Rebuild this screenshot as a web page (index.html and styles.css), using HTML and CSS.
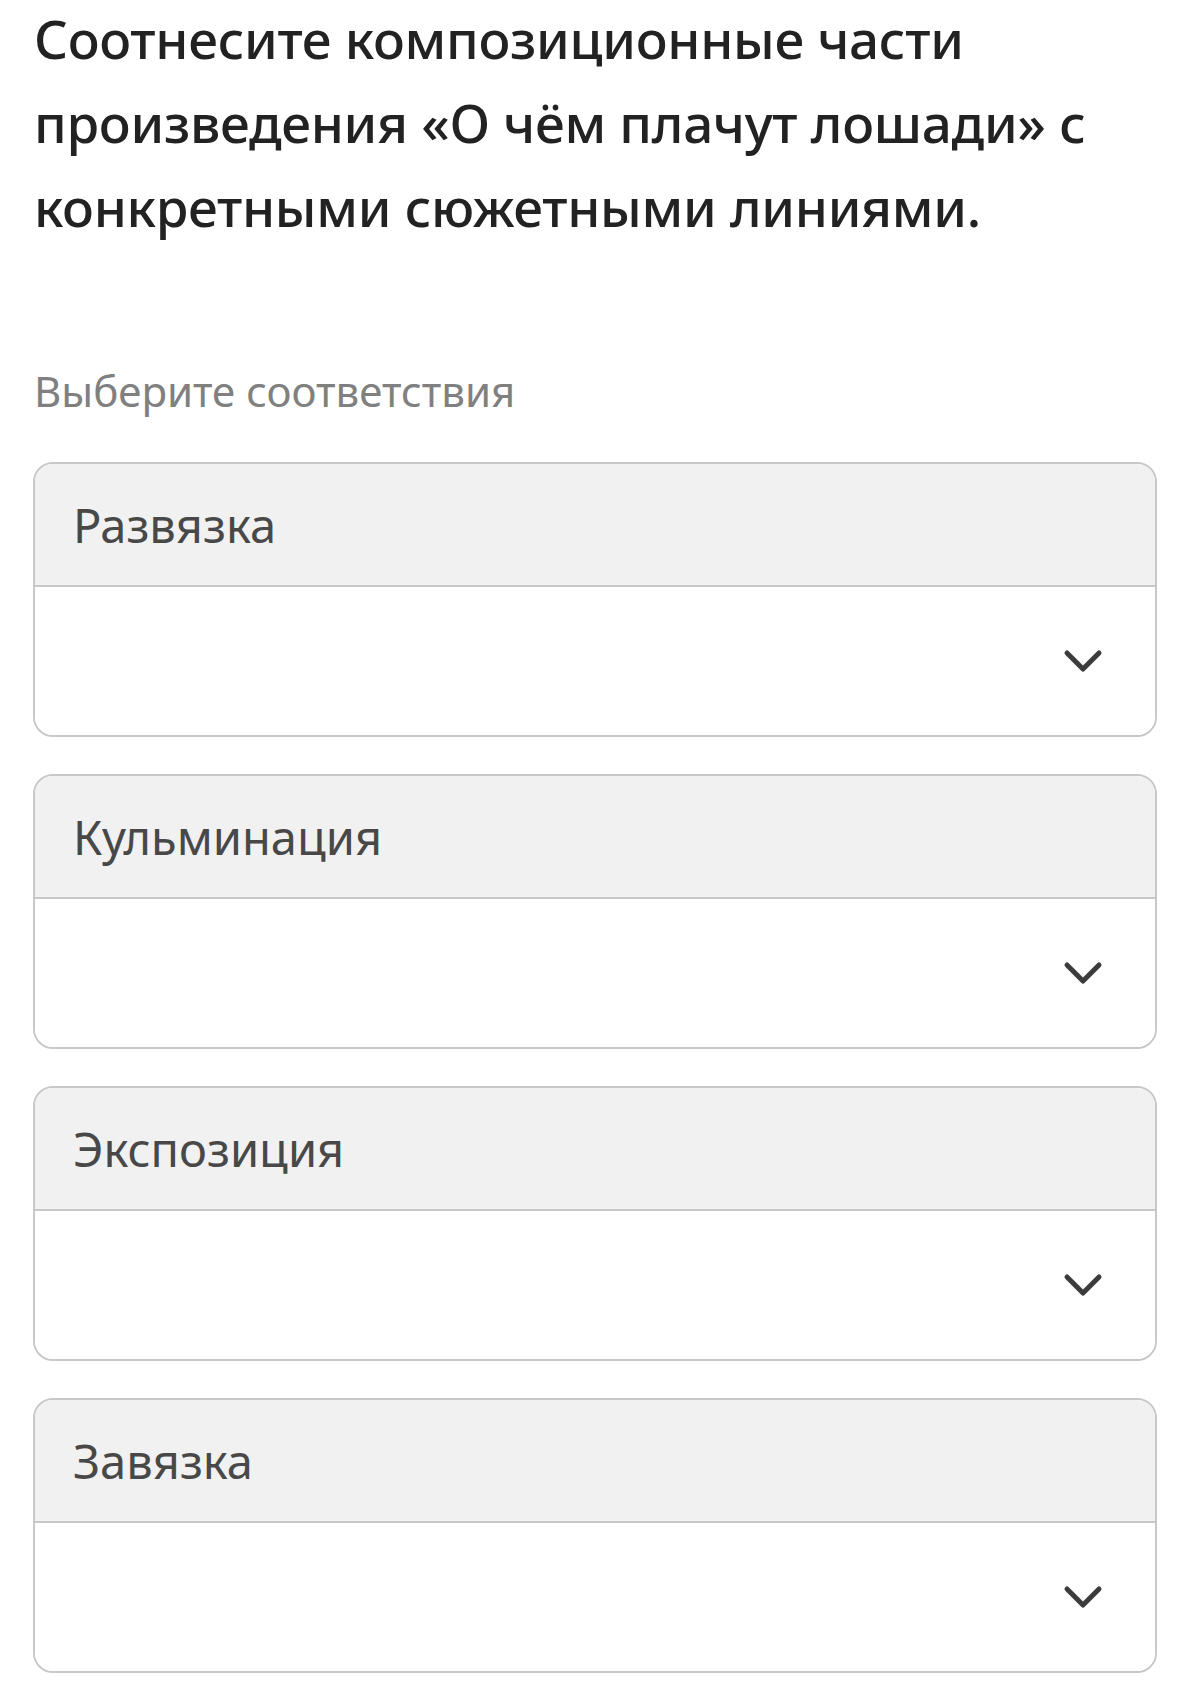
FILE: index.html
```html
<!DOCTYPE html>
<html lang="ru">
<head>
<meta charset="utf-8">
<title>Соответствия</title>
<link rel="stylesheet" href="styles.css">
</head>
<body>
<main class="task">
  <h1 class="task-title">Соотнесите композиционные части произведения «О чём плачут лошади» с конкретными сюжетными линиями.</h1>
  <p class="task-hint">Выберите соответствия</p>
  <div class="match-list">
    <section class="match">
      <div class="match-head">Развязка</div>
      <div class="match-select">
        <svg class="chevron" viewBox="0 0 40 24" width="40" height="24"><polyline points="4,4 20,20 36,4"/></svg>
      </div>
    </section>
    <section class="match">
      <div class="match-head">Кульминация</div>
      <div class="match-select">
        <svg class="chevron" viewBox="0 0 40 24" width="40" height="24"><polyline points="4,4 20,20 36,4"/></svg>
      </div>
    </section>
    <section class="match">
      <div class="match-head">Экспозиция</div>
      <div class="match-select">
        <svg class="chevron" viewBox="0 0 40 24" width="40" height="24"><polyline points="4,4 20,20 36,4"/></svg>
      </div>
    </section>
    <section class="match">
      <div class="match-head">Завязка</div>
      <div class="match-select">
        <svg class="chevron" viewBox="0 0 40 24" width="40" height="24"><polyline points="4,4 20,20 36,4"/></svg>
      </div>
    </section>
  </div>
</main>
</body>
</html>
```
FILE: styles.css
```css
html, body {
  margin: 0;
  padding: 0;
  background: #ffffff;
}

body {
  font-family: "Noto Sans", "Open Sans", sans-serif;
}

.task {
  padding: 0 46px 40px 33px;
}

.task-title {
  margin: -3px 0 0 1px;
  font-size: 53px;
  line-height: 84px;
  font-weight: 500;
  letter-spacing: -0.3px;
  color: #222222;
}

.task-hint {
  margin: 117px 0 0 1px;
  font-size: 42px;
  line-height: 50px;
  color: #808080;
}

.match-list {
  margin-top: 46px;
  display: flex;
  flex-direction: column;
  gap: 37px;
}

.match {
  border: 2px solid #c8c8c8;
  border-radius: 20px;
  overflow: hidden;
}

.match-head {
  height: 121px;
  display: flex;
  align-items: center;
  padding-left: 38px;
  background: #f1f1f1;
  border-bottom: 2px solid #c8c8c8;
  font-size: 47px;
  color: #484848;
}

.match-select {
  height: 148px;
  display: flex;
  align-items: center;
  justify-content: flex-end;
  padding-right: 52px;
  background: #ffffff;
}

.chevron {
  display: block;
  fill: none;
  stroke: #3c3c3c;
  stroke-width: 5;
  stroke-linecap: round;
  stroke-linejoin: round;
}
```
